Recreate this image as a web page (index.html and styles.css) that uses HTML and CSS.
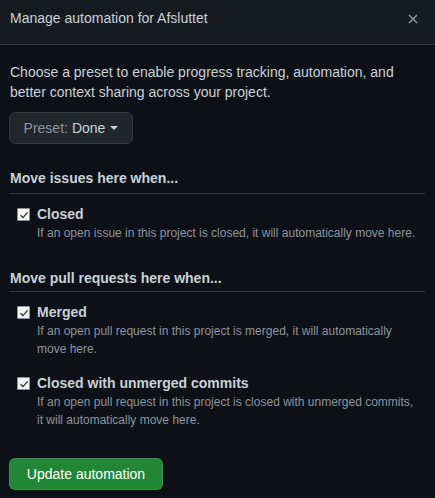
FILE: index.html
```html
<!DOCTYPE html>
<html lang="en">
<head>
<meta charset="utf-8">
<title>Manage automation</title>
<link rel="stylesheet" href="styles.css">
</head>
<body>
<div class="dialog">
  <header class="dialog-header">
    <h1 class="dialog-title">Manage automation for Afsluttet</h1>
    <button class="close-btn" aria-label="Close">
      <svg width="16" height="16" viewBox="0 0 16 16"><path d="M3.72 3.72a.75.75 0 0 1 1.06 0L8 6.94l3.22-3.22a.75.75 0 1 1 1.06 1.06L9.06 8l3.22 3.22a.75.75 0 1 1-1.06 1.06L8 9.06l-3.22 3.22a.75.75 0 0 1-1.06-1.06L6.94 8 3.72 4.78a.75.75 0 0 1 0-1.06z" fill="currentColor"/></svg>
    </button>
  </header>
  <div class="dialog-body">
    <p class="intro">Choose a preset to enable progress tracking, automation, and better context sharing across your project.</p>
    <button class="btn preset-btn"><span class="muted">Preset:</span> Done <span class="caret"></span></button>

    <h2 class="section-title first">Move issues here when...</h2>
    <div class="option">
      <span class="checkbox"><svg width="10" height="10" viewBox="0 0 10 10"><path d="M1.5 5.2 L4 7.6 L8.6 2.4" fill="none" stroke="#3a3a3a" stroke-width="1.4"/></svg></span>
      <div class="option-text">
        <div class="option-label">Closed</div>
        <div class="option-desc">If an open issue in this project is closed, it will automatically move here.</div>
      </div>
    </div>

    <h2 class="section-title">Move pull requests here when...</h2>
    <div class="option">
      <span class="checkbox"><svg width="10" height="10" viewBox="0 0 10 10"><path d="M1.5 5.2 L4 7.6 L8.6 2.4" fill="none" stroke="#3a3a3a" stroke-width="1.4"/></svg></span>
      <div class="option-text">
        <div class="option-label">Merged</div>
        <div class="option-desc">If an open pull request in this project is merged, it will automatically move here.</div>
      </div>
    </div>
    <div class="option next">
      <span class="checkbox"><svg width="10" height="10" viewBox="0 0 10 10"><path d="M1.5 5.2 L4 7.6 L8.6 2.4" fill="none" stroke="#3a3a3a" stroke-width="1.4"/></svg></span>
      <div class="option-text">
        <div class="option-label">Closed with unmerged commits</div>
        <div class="option-desc">If an open pull request in this project is closed with unmerged commits, it will automatically move here.</div>
      </div>
    </div>

    <button class="btn btn-primary">Update automation</button>
  </div>
</div>
</body>
</html>
```

FILE: styles.css
```css
* { box-sizing: border-box; }
html, body {
  margin: 0;
  padding: 0;
  background: #0d1117;
}
body {
  font-family: "Liberation Sans", Arial, sans-serif;
  font-size: 14px;
  line-height: 20px;
  color: #c9d1d9;
  width: 435px;
  height: 498px;
  overflow: hidden;
}
.dialog-header {
  height: 45px;
  background: #161b22;
  border-bottom: 1px solid #30363d;
  display: flex;
  align-items: flex-start;
  justify-content: space-between;
  padding: 8px 10px 0 10px;
}
.dialog-title {
  margin: 0;
  font-size: 14px;
  font-weight: 400;
  line-height: 20px;
  color: #c9d1d9;
}
.close-btn {
  background: none;
  border: 0;
  padding: 0;
  margin: 3px 4px 0 0;
  color: #8b949e;
  width: 16px;
  height: 16px;
  display: flex;
}
.dialog-body {
  padding: 17px 10px 0 9px;
}
.intro {
  margin: 0 0 10px 1px;
}
.btn {
  font-family: inherit;
  font-size: 14px;
  line-height: 20px;
  border-radius: 6px;
  padding: 5px 12px;
  height: 32px;
  display: inline-flex;
  align-items: center;
  gap: 4px;
  white-space: nowrap;
}
.preset-btn {
  width: 124px;
  background: #21262d;
  border: 1px solid #30363d;
  color: #c9d1d9;
  justify-content: center;
}
.muted { color: #8b949e; }
.caret {
  width: 0;
  height: 0;
  border-left: 4px solid transparent;
  border-right: 4px solid transparent;
  border-top: 4px solid #c9d1d9;
  margin-left: 1px;
}
.section-title {
  margin: 26px 0 0 0;
  padding: 0 0 3px 1px;
  font-size: 14px;
  line-height: 20px;
  font-weight: 700;
  color: #c9d1d9;
  border-bottom: 1px solid #30363d;
}
.section-title.first { margin-top: 24px; padding-bottom: 5px; }
.option {
  display: flex;
  align-items: flex-start;
  padding: 10px 5px 0 8px;
}
.option.next { padding-top: 15px; }
.checkbox {
  flex: none;
  width: 13px;
  height: 13px;
  margin-top: 4px;
  background: #f3f3f3;
  border: 1px solid #8b949e;
  border-radius: 1px;
  display: flex;
  align-items: center;
  justify-content: center;
}
.option-text {
  margin-left: 7px;
}
.option-label {
  font-weight: 700;
  line-height: 20px;
  color: #c9d1d9;
}
.option-desc {
  font-size: 12px;
  line-height: 18px;
  color: #8b949e;
}
.btn-primary {
  margin-top: 29px;
  width: 154px;
  background: #238636;
  border: 1px solid rgba(240, 246, 252, 0.1);
  color: #ffffff;
  justify-content: center;
}
```
